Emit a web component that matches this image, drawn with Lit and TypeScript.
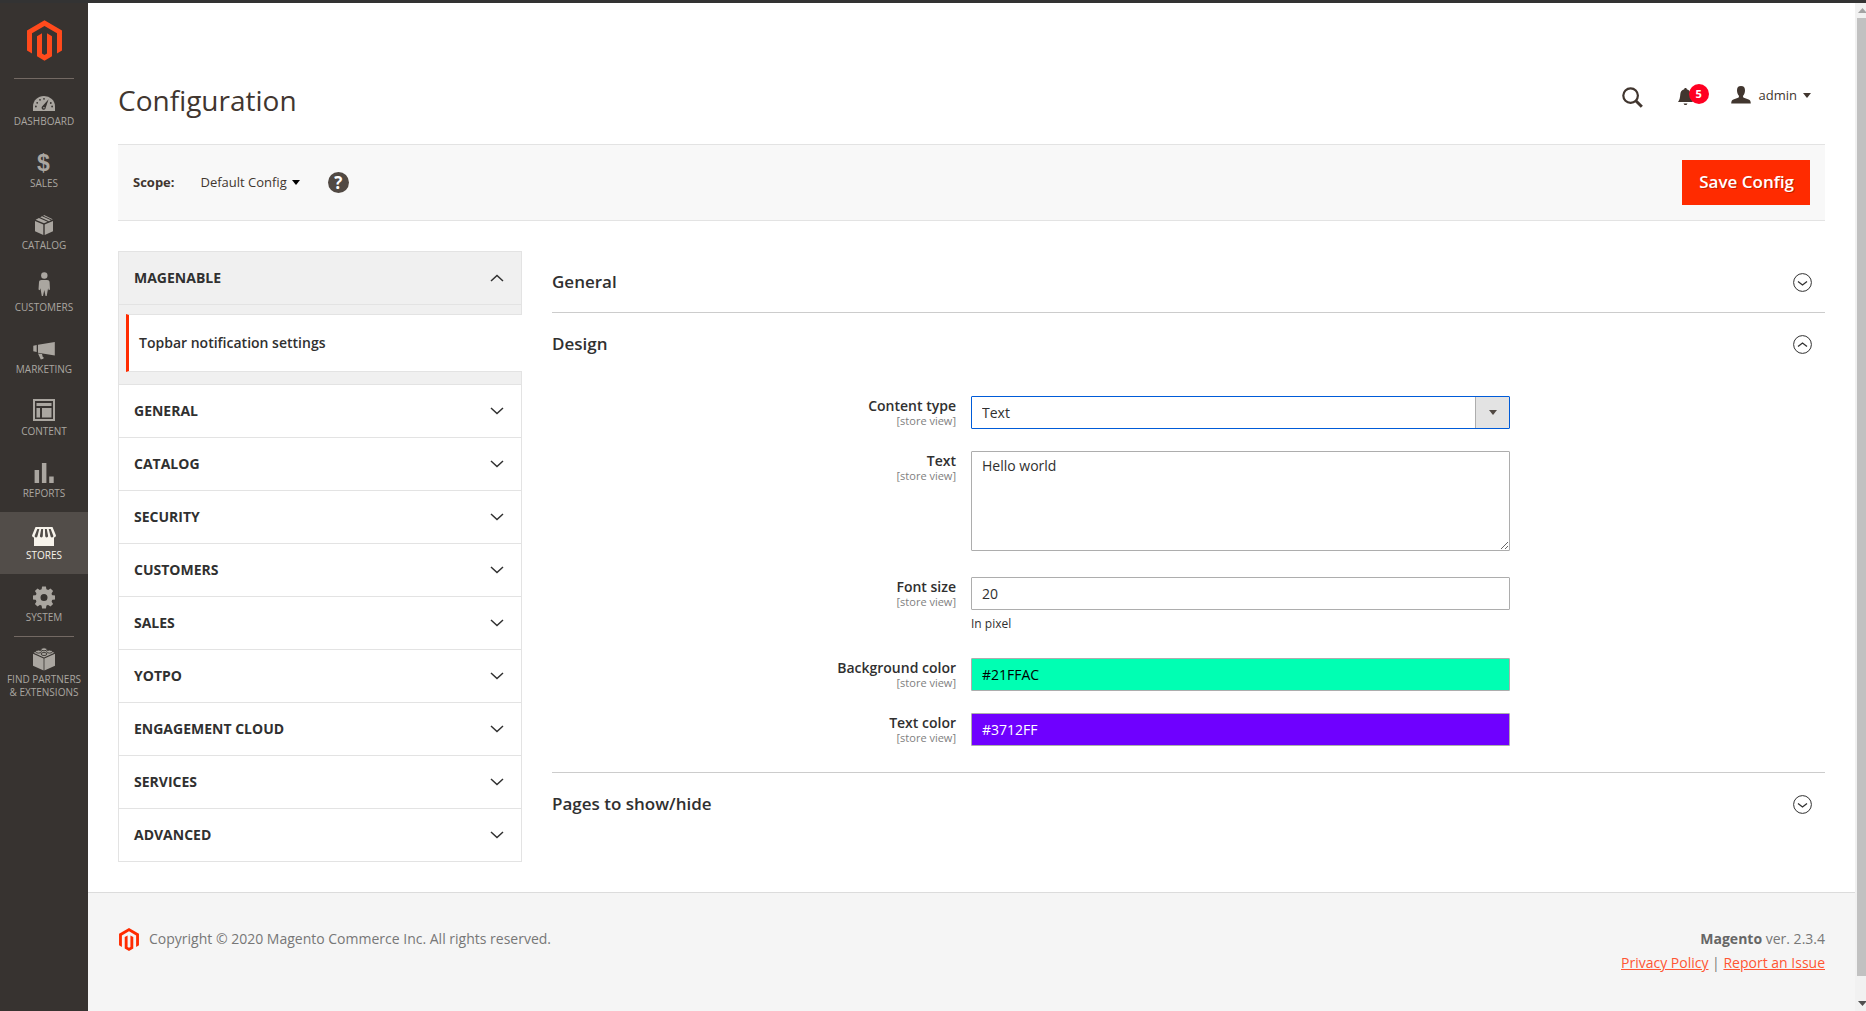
import { LitElement, html, svg, css, nothing } from "lit";
import type { SVGTemplateResult } from "lit";
import { customElement, property } from "lit/decorators.js";
import { classMap } from "lit/directives/class-map.js";

const MAGENTO_MARK =
  "M12 24l-4.455-2.572v-12l2.97-1.715v12.001l1.485.902 1.485-.902V7.713l2.971 1.715v12L12 24zM22.391 6v12l-2.969 1.714V7.713L12 3.43 4.574 7.713v12.001L1.609 18V6L12 0l10.391 6z";

const mark = (cls: string) => html`
  <svg class=${cls} viewBox="1.6 0 20.8 24" aria-hidden="true"><path d=${MAGENTO_MARK} fill="currentColor" /></svg>
`;

const GEAR_TEETH = [0, 45, 90, 135, 180, 225, 270, 315];

/* Menu icons share a 24 x 28 box and rest on a common lower edge. */
const menuIcons: Record<string, SVGTemplateResult> = {
  dashboard: svg`
    <path d="M1 25v-4.500a11 10.500 0 0 1 22 0V25z" />
    <g class="cut">
      <circle cx="3.900" cy="20.500" r="0.900" /><circle cx="5.200" cy="16.800" r="0.900" />
      <circle cx="8" cy="13.800" r="0.900" /><circle cx="12" cy="12.800" r="0.900" />
      <circle cx="18.800" cy="17" r="0.900" /><circle cx="20.100" cy="20.500" r="0.900" />
      <path d="M16.600 13.200l-3 8.800a2 2 0 1 1-3.300-1.700z" />
    </g>
    <circle cx="11.900" cy="21.700" r="0.800" />`,
  sales: svg`<text x="11.500" y="23" text-anchor="middle" class="sign">$</text>`,
  catalog: svg`
    <path d="M3 11l8.300 3.500V25L3 21.200zM21 11l-8.300 3.500V25l8.300-3.800z" />
    <path d="M3.600 9.700l3.300-1.700 8.700 3.700L12 13.300zM8.200 7.300l1.900-1 8.800 3.900-2 1zM11.300 5.700L12 5l8.700 4.300-.8.500z" />`,
  customers: svg`
    <circle cx="12.300" cy="3.500" r="3.200" />
    <path d="M9.500 8h5.600c1.500 0 2.400.8 2.500 2.200l.4 7.300-1.300.7-.6-2-1.400 7.800h-1.200L12.300 18 11 24H9.800L8.400 16.200l-.6 2-1.300-.7.500-7.300C7.100 8.800 8 8 9.500 8z" />`,
  marketing: svg`
    <path d="M1.300 11.800l3.400-.7v6.900l-3.400-.7zM6 10.800L22.800 8v13.500L6 18.800zM6 19.500l4 .6.800 2.800.9.400-.3 1.500-2.600.6z" />`,
  content: svg`
    <path fill-rule="evenodd" d="M1 3h22v22H1zM3 5v18h18V5z" />
    <path d="M4.500 7h15v3h-15zM4.500 12h3.500v9.500H4.500zM10 12h9.500v9.500H10z" />`,
  reports: svg`<path d="M2.600 12h4.500v13H2.600zM9.900 5h4.500v20H9.900zM17.200 18.500h4.500V25h-4.500z" />`,
  stores: svg`
    <path d="M3.500 7h17l3.500 8.500a2.300 2.300 0 0 1-2 2V26H2v-8.500a2.300 2.300 0 0 1-2-2z" />
    <path class="cut" d="M5.300 9h2L5.500 16a1.400 1.400 0 0 1-2.900 0zM9.200 9h1.900l-.3 7a1.400 1.400 0 0 1-2.900 0zM12.900 9h1.900l1.300 7a1.400 1.400 0 0 1-2.900 0zM16.700 9h2l2.700 7a1.400 1.400 0 0 1-2.900 0z" />`,
  system: svg`
    <circle cx="12" cy="15.500" r="6" fill="none" stroke="currentColor" stroke-width="5" />
    ${GEAR_TEETH.map(
      (a) => svg`<path d="M9.400 8.500l.7-4h3.800l.7 4z" transform=${`rotate(${a} 12 15.5)`} />`
    )}`,
  partners: svg`
    <path d="M1 9.800l10.600 4.700v12L1 21.700zM23 9.800l-10.600 4.700v12L23 21.700z" />
    <path d="M1.600 8.800L12 4.600l10.400 4.200L12 13.500z" />
    <g class="stud">
      <ellipse cx="12" cy="5.300" rx="2.900" ry="1.500" /><ellipse cx="6.500" cy="7.600" rx="2.900" ry="1.500" />
      <ellipse cx="17.500" cy="7.600" rx="2.900" ry="1.500" /><ellipse cx="12" cy="10" rx="2.900" ry="1.500" />
    </g>`,
};

interface MenuItem {
  icon: string;
  label: string;
  ruled?: boolean;
  active?: boolean;
}

const MENU: MenuItem[] = [
  { icon: "dashboard", label: "Dashboard", ruled: true },
  { icon: "sales", label: "Sales" },
  { icon: "catalog", label: "Catalog" },
  { icon: "customers", label: "Customers" },
  { icon: "marketing", label: "Marketing" },
  { icon: "content", label: "Content" },
  { icon: "reports", label: "Reports" },
  { icon: "stores", label: "Stores", active: true },
  { icon: "system", label: "System" },
  { icon: "partners", label: "Find Partners & Extensions", ruled: true },
];

@customElement("admin-menu")
export class AdminMenu extends LitElement {
  static styles = css`
    :host {
      display: block;
      flex: none;
      width: 88px;
      background: #373330;
      color: #aaa6a0;
    }
    .home {
      display: flex;
      justify-content: center;
      padding: 17px 0;
      color: #ff4a1c;
    }
    .mark {
      width: 35px;
      height: 41px;
    }
    .item {
      display: flex;
      flex-direction: column;
      align-items: center;
      box-sizing: border-box;
      min-height: 62px;
      padding: 8px 4px 0;
      color: inherit;
      font-size: 10px;
      line-height: 13px;
      text-align: center;
      text-decoration: none;
      text-transform: uppercase;
    }
    .ruled {
      padding-top: 0;
    }
    .ruled::before {
      content: "";
      width: 60px;
      height: 1px;
      margin-bottom: 7px;
      background: #736963;
    }
    .active {
      background: #524d49;
      color: #f7f3eb;
    }
    .icon {
      width: 24px;
      height: 28px;
      margin-bottom: 1px;
      fill: currentColor;
    }
    .cut {
      fill: #373330;
    }
    .active .cut {
      fill: #524d49;
    }
    .stud {
      stroke: #373330;
      stroke-width: 0.9;
    }
    .sign {
      font: bold 23px "Liberation Sans", sans-serif;
    }
  `;

  render() {
    return html`
      <nav aria-label="Main">
        <a class="home" href="#" aria-label="Magento">${mark("mark")}</a>
        ${MENU.map(
          (m) => html`
            <a
              href="#${m.icon}"
              class=${classMap({ item: true, ruled: !!m.ruled, active: !!m.active })}
              aria-current=${m.active ? "page" : nothing}
            >
              <svg class="icon" viewBox="0 0 24 28" aria-hidden="true">${menuIcons[m.icon]}</svg>
              <span>${m.label}</span>
            </a>
          `
        )}
      </nav>
    `;
  }
}

const GROUPS = ["General", "Catalog", "Security", "Customers", "Sales", "Yotpo", "Engagement Cloud", "Services", "Advanced"];

const chevron = (up = false) => html`
  <svg class="chevron" viewBox="0 0 14 8" aria-hidden="true">
    <path d=${up ? "M1 7l6-5.500L13 7" : "M1 1l6 5.500L13 1"} fill="none" stroke="currentColor" stroke-width="1.500" />
  </svg>
`;

@customElement("config-tabs")
export class ConfigTabs extends LitElement {
  static styles = css`
    :host {
      display: block;
      color: #303030;
    }
    .tabs {
      border: 1px solid #e3e3e3;
      border-width: 1px 0 0;
    }
    .head {
      display: flex;
      align-items: center;
      justify-content: space-between;
      box-sizing: border-box;
      width: 100%;
      height: 53px;
      padding: 0 17px 0 15px;
      border: 1px solid #e3e3e3;
      border-top: 0;
      background: #fff;
      color: inherit;
      font: bold 14px/20px "Open Sans", sans-serif;
      text-transform: uppercase;
    }
    .open {
      background: #f0f0f0;
    }
    .chevron {
      width: 14px;
      height: 8px;
    }
    .items {
      display: flex;
      flex-direction: column;
      border-left: 1px solid #e3e3e3;
      border-bottom: 1px solid #e3e3e3;
      background: #f0f0f0;
    }
    .items::before,
    .items::after {
      content: "";
      height: 9px;
      border-right: 1px solid #e3e3e3;
    }
    .items::after {
      height: 12px;
    }
    .current {
      margin-left: 7px;
      padding: 18px 10px;
      border: 1px solid #e3e3e3;
      border-right: 0;
      border-left: 3px solid #ff2b00;
      background: #fff;
      color: inherit;
      font-size: 14px;
      font-weight: 600;
      line-height: 20px;
      text-decoration: none;
    }
  `;

  render() {
    return html`
      <nav class="tabs" aria-label="Configuration sections">
        <button class="head open" type="button" aria-expanded="true">Magenable ${chevron(true)}</button>
        <div class="items">
          <a class="current" href="#topbar" aria-current="page">Topbar notification settings</a>
        </div>
        ${GROUPS.map((g) => html`<button class="head" type="button" aria-expanded="false">${g} ${chevron()}</button>`)}
      </nav>
    `;
  }
}

@customElement("config-section")
export class ConfigSection extends LitElement {
  @property() heading = "";
  @property({ type: Boolean }) open = false;
  @property({ type: Boolean }) last = false;

  static styles = css`
    :host {
      display: block;
      border-bottom: 1px solid #ccc;
      color: #303030;
    }
    :host([last]) {
      border-bottom: 0;
    }
    .title {
      margin: 0;
    }
    .toggle {
      display: flex;
      align-items: center;
      justify-content: space-between;
      width: 100%;
      height: 61px;
      padding: 0 13px 0 0;
      border: 0;
      background: none;
      color: inherit;
      font: 600 17px/24px "Open Sans", sans-serif;
    }
    .ring {
      width: 19px;
      height: 19px;
      margin-top: 2px;
      fill: none;
      stroke: currentColor;
    }
  `;

  render() {
    return html`
      <h2 class="title">
        <button class="toggle" type="button" aria-expanded=${this.open}>
          ${this.heading}
          <svg class="ring" viewBox="0 0 19 19" aria-hidden="true">
            <circle cx="9.500" cy="9.500" r="8.900" />
            <path d=${this.open ? "M5 11.500l4.500-3.500 4.500 3.500" : "M5 8.500L9.500 12 14 8.500"} stroke-width="1.300" />
          </svg>
        </button>
      </h2>
      <slot></slot>
    `;
  }
}

@customElement("app-root")
export class AppRoot extends LitElement {
  static styles = css`
    :host {
      display: flex;
      flex-direction: column;
      box-sizing: border-box;
      min-height: 100vh;
      border-top: 3px solid #333;
      background: #fff;
      color: #41362f;
      font-family: "Open Sans", sans-serif;
      font-size: 14px;
      line-height: 20px;
    }
    button,
    input,
    select,
    textarea {
      font-family: inherit;
    }
    .frame {
      display: flex;
      flex: 1;
    }
    .page {
      display: flex;
      flex: 1;
      flex-direction: column;
      min-width: 0;
    }
    .header {
      display: flex;
      align-items: flex-start;
      justify-content: space-between;
      padding: 78px 44px 25px 30px;
    }
    .heading {
      margin: 0;
      font-size: 28px;
      font-weight: 400;
      line-height: 38px;
    }
    .tools {
      display: flex;
      align-items: center;
      height: 28px;
    }
    .tool {
      display: flex;
      align-items: center;
      padding: 0;
      border: 0;
      background: none;
      color: #41362f;
      font-size: 13px;
      line-height: 20px;
    }
    .search {
      margin: 4px 35px 0 0;
    }
    .search-icon {
      width: 21px;
      height: 21px;
    }
    .bell {
      position: relative;
      margin: 4px 38px 0 0;
    }
    .bell-icon {
      width: 15px;
      height: 18px;
    }
    .count {
      position: absolute;
      top: -4px;
      left: 11px;
      width: 20px;
      height: 20px;
      border-radius: 10px;
      background: #ff0022;
      color: #fff;
      font-size: 11px;
      font-weight: 700;
      line-height: 20px;
      text-align: center;
    }
    .user-icon {
      width: 20px;
      height: 18px;
      margin-right: 8px;
    }
    .caret {
      width: 8px;
      height: 5px;
      fill: currentColor;
    }
    .user .caret {
      margin-left: 6px;
    }
    .actions {
      display: flex;
      align-items: center;
      margin: 0 30px;
      padding: 15px;
      border: 1px solid #e3e3e3;
      border-width: 1px 0;
      background: #f8f8f8;
      font-size: 13px;
    }
    .scope {
      display: flex;
      align-items: center;
      flex: 1;
    }
    .scope-label,
    .switcher {
      padding-bottom: 2px;
    }
    .scope-label {
      margin-right: 26px;
      font-weight: 700;
    }
    .switcher .caret {
      margin: 2px 0 0 5px;
      color: #000;
    }
    .help {
      display: block;
      width: 21px;
      height: 21px;
      margin-left: 28px;
      border-radius: 50%;
      background: #514943;
      color: #fff;
      font-size: 17px;
      font-weight: 700;
      line-height: 21px;
      text-align: center;
      text-decoration: none;
    }
    .save {
      height: 45px;
      padding: 0 16px 2px 17px;
      border: 0;
      background: #ff2b00;
      color: #fff;
      font-size: 17px;
      font-weight: 600;
      line-height: 24px;
      text-shadow: 1px 1px 0 rgba(0, 0, 0, 0.25);
    }
    .content {
      display: grid;
      grid-template-columns: minmax(0, 404fr) minmax(0, 1273fr);
      column-gap: 30px;
      align-items: start;
      padding: 30px;
    }
    .form {
      display: flex;
      flex-direction: column;
      gap: 22px;
      padding: 22px 0 26px;
    }
    .row {
      display: grid;
      grid-template-columns: minmax(0, 404fr) minmax(0, 539fr) minmax(0, 300fr);
      column-gap: 15px;
      align-items: start;
      color: #303030;
    }
    .label {
      display: block;
      text-align: right;
      font-weight: 600;
      line-height: 20px;
    }
    .store {
      display: block;
      color: #808080;
      font-size: 11px;
      font-weight: 400;
      line-height: 10px;
    }
    .control {
      display: block;
      box-sizing: border-box;
      width: 100%;
      height: 33px;
      margin: 0;
      padding: 0 10px;
      border: 1px solid #adadad;
      border-radius: 1px;
      outline: 0;
      background: #fff;
      color: #303030;
      font-size: 14px;
      line-height: 20px;
    }
    .area {
      height: 100px;
      margin-bottom: 4px;
      padding: 4px 10px;
      resize: vertical;
    }
    .picker {
      position: relative;
    }
    .select {
      appearance: none;
      padding-right: 44px;
      border-color: #005bd8;
    }
    .drop {
      position: absolute;
      top: 1px;
      right: 1px;
      bottom: 1px;
      display: flex;
      align-items: center;
      justify-content: center;
      width: 33px;
      border-left: 1px solid #adadad;
      background: #e3e3e3;
      color: #514943;
      pointer-events: none;
    }
    .note {
      margin: 5px 0 4px;
      font-size: 12px;
      line-height: 17px;
    }
    .green {
      background: #00ffb3;
      color: #000;
    }
    .violet {
      background: #6f00ff;
      color: #fff;
    }
    .footer {
      display: flex;
      flex: 1;
      justify-content: space-between;
      align-items: flex-start;
      padding: 34px 30px 30px;
      border-top: 1px solid #dcdcdc;
      background: #f5f5f5;
      color: #777;
      line-height: 24px;
    }
    .copy {
      display: flex;
      align-items: center;
    }
    .foot-mark {
      width: 20px;
      height: 23px;
      margin: 0 10px 0 1px;
      color: #ff2b00;
    }
    .legal {
      text-align: right;
    }
    .product {
      color: #666;
    }
    .link {
      color: #ff5533;
      text-decoration: underline;
    }
    .scroll {
      display: flex;
      flex-direction: column;
      flex: none;
      justify-content: space-between;
      width: 11px;
      overflow: hidden;
      background: #f1f1f1;
    }
    .arrow {
      display: block;
      width: 9px;
      height: 5px;
      margin: 5px 0 5px 3px;
    }
    .thumb {
      flex: 1;
      margin-left: 2px;
      background: #c1c1c1;
    }
    .arrow-down {
      margin: 25px 0 5px 3px;
    }
  `;

  private caret() {
    return html`<svg class="caret" viewBox="0 0 8 5" aria-hidden="true"><path d="M0 0h8L4 5z" /></svg>`;
  }

  private label(id: string, text: string) {
    return html`<label class="label" for=${id}>${text}<span class="store">[store view]</span></label>`;
  }

  render() {
    return html`
      <div class="frame">
        <admin-menu></admin-menu>
        <div class="page">
          <header class="header">
            <h1 class="heading">Configuration</h1>
            <div class="tools">
              <button class="tool search" type="button" aria-label="Search">
                <svg class="search-icon" viewBox="0 0 21 21" fill="none" stroke="currentColor" aria-hidden="true">
                  <circle cx="8.600" cy="8.600" r="7.300" stroke-width="2.200" />
                  <path d="M13.800 13.800l6 6" stroke-width="3" />
                </svg>
              </button>
              <button class="tool bell" type="button" aria-label="Notifications">
                <svg class="bell-icon" viewBox="0 0 15 18" fill="currentColor" aria-hidden="true">
                  <path d="M7.500 0c.8 0 1.200.5 1.300 1.200 2.400.6 3.700 2.500 3.900 5 .2 3.300.8 5.800 2.300 7.800H0c1.500-2 2.100-4.500 2.300-7.800.2-2.500 1.500-4.400 3.900-5C6.300.5 6.700 0 7.500 0zM5.500 15.500h4l-1 1.500h-2z" />
                </svg>
                <span class="count">5</span>
              </button>
              <button class="tool user" type="button">
                <svg class="user-icon" viewBox="0 0 20 18" fill="currentColor" aria-hidden="true">
                  <path d="M10 0c2.800 0 4 1.600 4 4.200 0 2.400-.8 4.400-1.900 5.500-.3 1.300.2 2 1.500 2.400l4 1.400c1.500.5 2.100 1.500 2.200 4H.2c.1-2.500.7-3.500 2.200-4l4-1.400c1.300-.4 1.800-1.100 1.500-2.400C6.800 8.600 6 6.600 6 4.200 6 1.600 7.200 0 10 0z" />
                </svg>
                admin ${this.caret()}
              </button>
            </div>
          </header>

          <div class="actions">
            <div class="scope">
              <span class="scope-label">Scope:</span>
              <button class="tool switcher" type="button">Default Config ${this.caret()}</button>
              <a class="help" href="#help" aria-label="What is this?">?</a>
            </div>
            <button class="save" type="button">Save Config</button>
          </div>

          <main class="content">
            <config-tabs></config-tabs>
            <div>
              <config-section heading="General"></config-section>
              <config-section heading="Design" open>
                <form class="form">
                  <div class="row">
                    ${this.label("type", "Content type")}
                    <div class="picker">
                      <select class="control select" id="type">
                        <option>Text</option>
                      </select>
                      <span class="drop">${this.caret()}</span>
                    </div>
                  </div>
                  <div class="row">
                    ${this.label("text", "Text")}
                    <textarea class="control area" id="text" .value=${"Hello world"}></textarea>
                  </div>
                  <div class="row">
                    ${this.label("size", "Font size")}
                    <div>
                      <input class="control" id="size" type="text" value="20" />
                      <p class="note">In pixel</p>
                    </div>
                  </div>
                  <div class="row">
                    ${this.label("bg", "Background color")}
                    <input class="control green" id="bg" type="text" value="#21FFAC" />
                  </div>
                  <div class="row">
                    ${this.label("fg", "Text color")}
                    <input class="control violet" id="fg" type="text" value="#3712FF" />
                  </div>
                </form>
              </config-section>
              <config-section heading="Pages to show/hide" last></config-section>
            </div>
          </main>

          <footer class="footer">
            <div class="copy">${mark("foot-mark")}Copyright © 2020 Magento Commerce Inc. All rights reserved.</div>
            <div class="legal">
              <div><strong class="product">Magento</strong> ver. 2.3.4</div>
              <div><a class="link" href="#privacy">Privacy Policy</a> | <a class="link" href="#report">Report an Issue</a></div>
            </div>
          </footer>
        </div>
        <div class="scroll" aria-hidden="true">
          <svg class="arrow" viewBox="0 0 9 5"><path d="M0 5l4.500-5L9 5z" fill="#a3a3a3" /></svg>
          <div class="thumb"></div>
          <svg class="arrow arrow-down" viewBox="0 0 9 5"><path d="M0 0h9L4.500 5z" fill="#505050" /></svg>
        </div>
      </div>
    `;
  }
}
